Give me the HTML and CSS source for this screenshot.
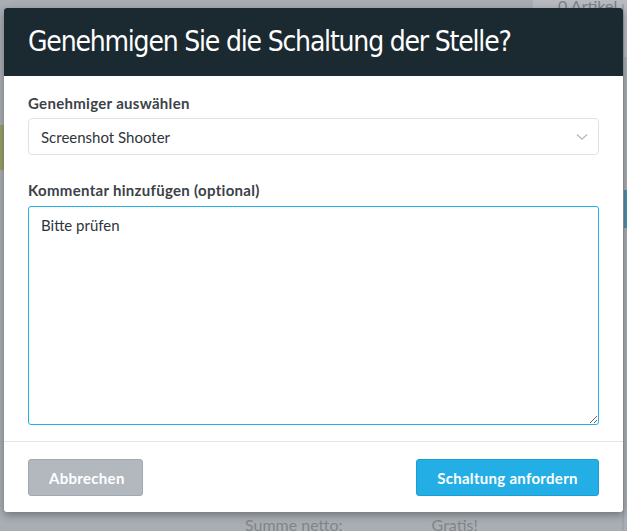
FILE: index.html
```html
<!DOCTYPE html>
<html lang="de">
<head>
<meta charset="utf-8">
<title>Schaltung anfordern</title>
<link rel="stylesheet" href="styles.css">
</head>
<body>
<div class="page">
  <aside class="cart">
    <div class="cart-head">0 Artikel</div>
    <div class="cart-mark"></div>
    <div class="cart-blue"></div>
  </aside>
  <div class="side-green"></div>
  <div class="totals">
    <span class="totals-label">Summe netto:</span>
    <span class="totals-value">Gratis!</span>
  </div>
</div>

<div class="modal" role="dialog" aria-labelledby="modal-title">
  <header class="modal-header">
    <h1 id="modal-title" class="modal-title">Genehmigen Sie die Schaltung der Stelle?</h1>
  </header>
  <div class="modal-body">
    <label class="field-label">Genehmiger auswählen</label>
    <div class="select">
      <span class="select-value">Screenshot Shooter</span>
      <svg class="chevron" width="12" height="8" viewBox="0 0 12 8"><path d="M1 1.5 L6 6.2 L11 1.5" fill="none" stroke="#b3b8be" stroke-width="1.3"/></svg>
    </div>
    <label class="field-label field-label-2" for="comment">Kommentar hinzufügen (optional)</label>
    <textarea id="comment" class="textarea" autofocus>Bitte prüfen</textarea>
  </div>
  <footer class="modal-footer">
    <button class="btn btn-cancel">Abbrechen</button>
    <button class="btn btn-primary">Schaltung anfordern</button>
  </footer>
</div>
</body>
</html>
```
FILE: styles.css
```css
html, body {
  margin: 0;
  padding: 0;
}
body {
  width: 627px;
  height: 531px;
  overflow: hidden;
  background: #a9aeb4;
  font-family: "Lato", "Liberation Sans", sans-serif;
  position: relative;
}
.page {
  position: relative;
  width: 627px;
  height: 531px;
}
.cart {
  position: absolute;
  left: 533px;
  top: 0;
  width: 94px;
  height: 531px;
  background: #a9aeb4;
}
.cart-head {
  height: 60px;
  background: #b7bbc0;
  color: #7c8187;
  font-size: 16px;
  line-height: 18px;
  padding-left: 25px;
  margin-top: -3px;
  white-space: nowrap;
}
.cart-mark {
  position: absolute;
  left: 89px;
  top: 4px;
  width: 2px;
  height: 527px;
  background: #9ea3a9;
}
.cart-blue {
  position: absolute;
  left: 91px;
  top: 190px;
  width: 3px;
  height: 38px;
  background: #4f8fae;
}
.side-green {
  position: absolute;
  left: 0;
  top: 125px;
  width: 6px;
  height: 45px;
  background: #99a16b;
}
.totals {
  position: absolute;
  left: 245px;
  top: 515px;
  display: flex;
  gap: 89px;
  color: #80858b;
  font-size: 16px;
  line-height: 20px;
}

.modal {
  position: absolute;
  left: 4px;
  top: 8px;
  width: 619px;
  background: #fff;
  border-radius: 3px;
  box-shadow: 0 3px 9px rgba(0, 0, 0, 0.35);
  overflow: hidden;
}
.modal-header {
  background: #1b2930;
  padding: 14px 24px;
}
.modal-title {
  margin: 0;
  font-family: "DejaVu Sans", sans-serif;
  font-stretch: condensed;
  font-weight: 400;
  font-size: 28px;
  line-height: 40px;
  letter-spacing: -1.2px;
  color: #fff;
}
.modal-body {
  padding: 17px 24px 16px;
  display: flex;
  flex-direction: column;
}
.field-label {
  display: block;
  font-size: 15px;
  font-weight: 700;
  line-height: 20px;
  letter-spacing: 0.3px;
  color: #3c4248;
  margin-bottom: 5px;
}
.field-label-2 {
  margin-top: 25px;
  margin-bottom: 6px;
}
.select {
  height: 37px;
  box-sizing: border-box;
  border: 1px solid #dfe2e5;
  border-radius: 4px;
  display: flex;
  align-items: center;
  justify-content: space-between;
  padding: 0 10px 0 12px;
}
.select-value {
  font-size: 15px;
  color: #2f353b;
}
.chevron {
  display: block;
}
.textarea {
  display: block;
  width: 100%;
  height: 219px;
  box-sizing: border-box;
  margin: 0;
  border: 1px solid #1db2ea;
  border-radius: 3px;
  padding: 8px 12px;
  font-family: "Lato", "Liberation Sans", sans-serif;
  font-size: 15px;
  line-height: 20px;
  color: #2f353b;
  outline: none;
  resize: vertical;
}
.modal-footer {
  border-top: 1px solid #e3e5e8;
  padding: 17px 24px 16px;
  display: flex;
  justify-content: space-between;
}
.btn {
  height: 37px;
  padding: 0 20px;
  border-radius: 3px;
  font-family: "Lato", "Liberation Sans", sans-serif;
  font-size: 15px;
  font-weight: 700;
  letter-spacing: 0.3px;
  color: #fff;
  cursor: pointer;
}
.btn-cancel {
  width: 115px;
  background: #b3b8bf;
  border: 1px solid #a3a9b0;
}
.btn-primary {
  width: 183px;
  background: #24aee6;
  border: 1px solid #1a9ed6;
}
```
